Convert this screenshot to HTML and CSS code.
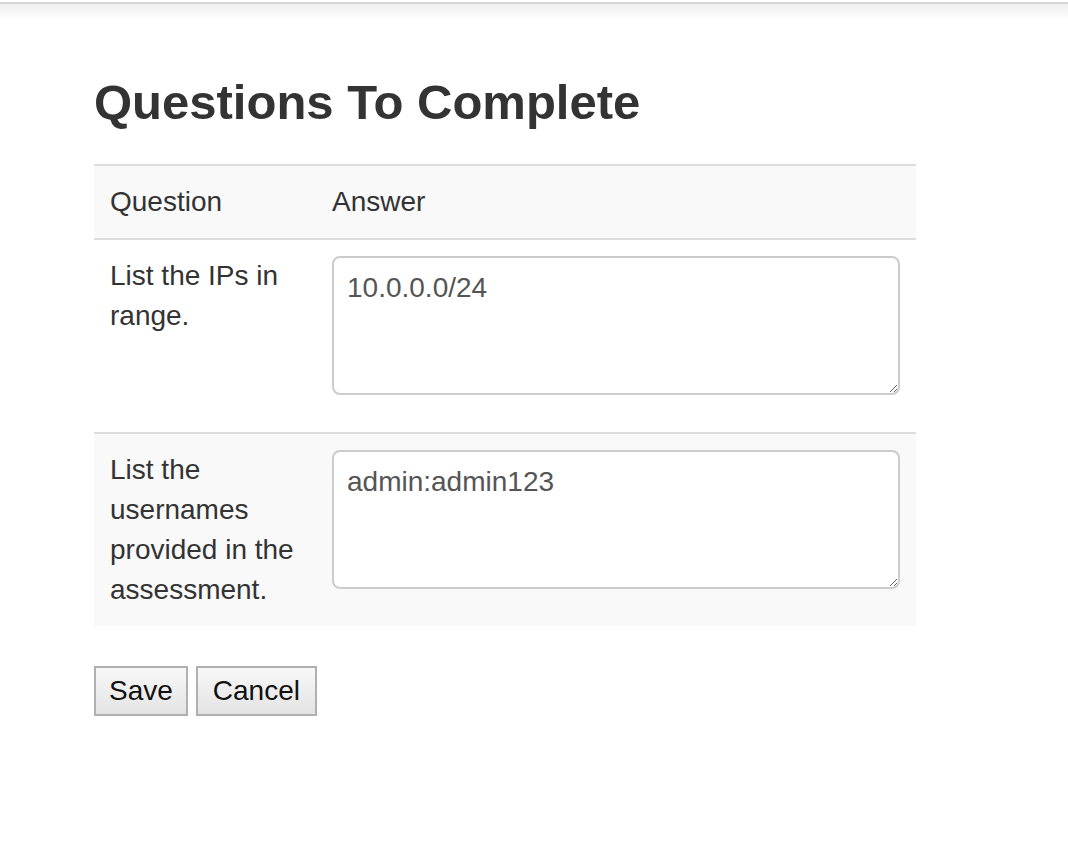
FILE: index.html
```html
<!DOCTYPE html>
<html>
<head>
<meta charset="utf-8">
<title>Questions To Complete</title>
<link rel="stylesheet" href="styles.css">
</head>
<body>
<div class="topbar"></div>
<main class="page">
  <h3 class="title">Questions To Complete</h3>
  <form class="qform">
    <table class="qtable">
      <thead>
        <tr class="head-row">
          <th class="col-q">Question</th>
          <th class="col-a">Answer</th>
        </tr>
      </thead>
      <tbody>
        <tr class="row">
          <td class="col-q">List the IPs in range.</td>
          <td class="col-a"><textarea class="answer">10.0.0.0/24</textarea></td>
        </tr>
        <tr class="row striped">
          <td class="col-q">List the usernames provided in the assessment.</td>
          <td class="col-a"><textarea class="answer">admin:admin123</textarea></td>
        </tr>
      </tbody>
    </table>
    <div class="actions">
      <button type="button" class="btn">Save</button>
      <button type="button" class="btn btn-cancel">Cancel</button>
    </div>
  </form>
</main>
</body>
</html>
```
FILE: styles.css
```css
html, body {
  margin: 0;
  padding: 0;
  background: #fff;
}

body {
  font-family: "Liberation Sans", Arial, Helvetica, sans-serif;
  color: #333;
}

.topbar {
  margin-top: 2px;
  height: 16px;
  border-top: 2px solid #d4d4d4;
  background: linear-gradient(to bottom, #efefef, #ffffff);
}

.page {
  padding-left: 94px;
}

.title {
  margin: 56px 0 35px 0;
  font-size: 49px;
  line-height: 53px;
  font-weight: bold;
  color: #333;
}

.qtable {
  width: 822px;
  border-collapse: collapse;
  border-spacing: 0;
  font-size: 28px;
  line-height: 40px;
  color: #333;
}

.qtable th,
.qtable td {
  padding: 16px;
  text-align: left;
  vertical-align: top;
}

.qtable th {
  font-weight: normal;
}

.head-row {
  background: #f9f9f9;
  border-top: 2px solid #dddddd;
  border-bottom: 2px solid #dddddd;
}

.col-q {
  width: 190px;
}

.row {
  background: #ffffff;
}

.row.striped {
  background: #f9f9f9;
  border-top: 2px solid #dddddd;
}

.answer {
  display: block;
  box-sizing: border-box;
  width: 568px;
  height: 139px;
  margin: 0 0 21px 0;
  padding: 10px 13px;
  border: 2px solid #cccccc;
  border-radius: 8px;
  background: #fff;
  font-family: "Liberation Sans", Arial, Helvetica, sans-serif;
  font-size: 28px;
  line-height: 40px;
  color: #555;
  resize: both;
}

.actions {
  display: flex;
  gap: 8px;
  margin-top: 40px;
}

.btn {
  box-sizing: border-box;
  height: 50px;
  padding: 0 13px;
  border: 2px solid #b0b0b0;
  border-radius: 0;
  background: linear-gradient(to bottom, #f8f8f8, #e3e3e3);
  font-family: "Liberation Sans", Arial, Helvetica, sans-serif;
  font-size: 28px;
  line-height: 32px;
  color: #111;
}

.btn-cancel {
  padding: 0 15px;
}
```
